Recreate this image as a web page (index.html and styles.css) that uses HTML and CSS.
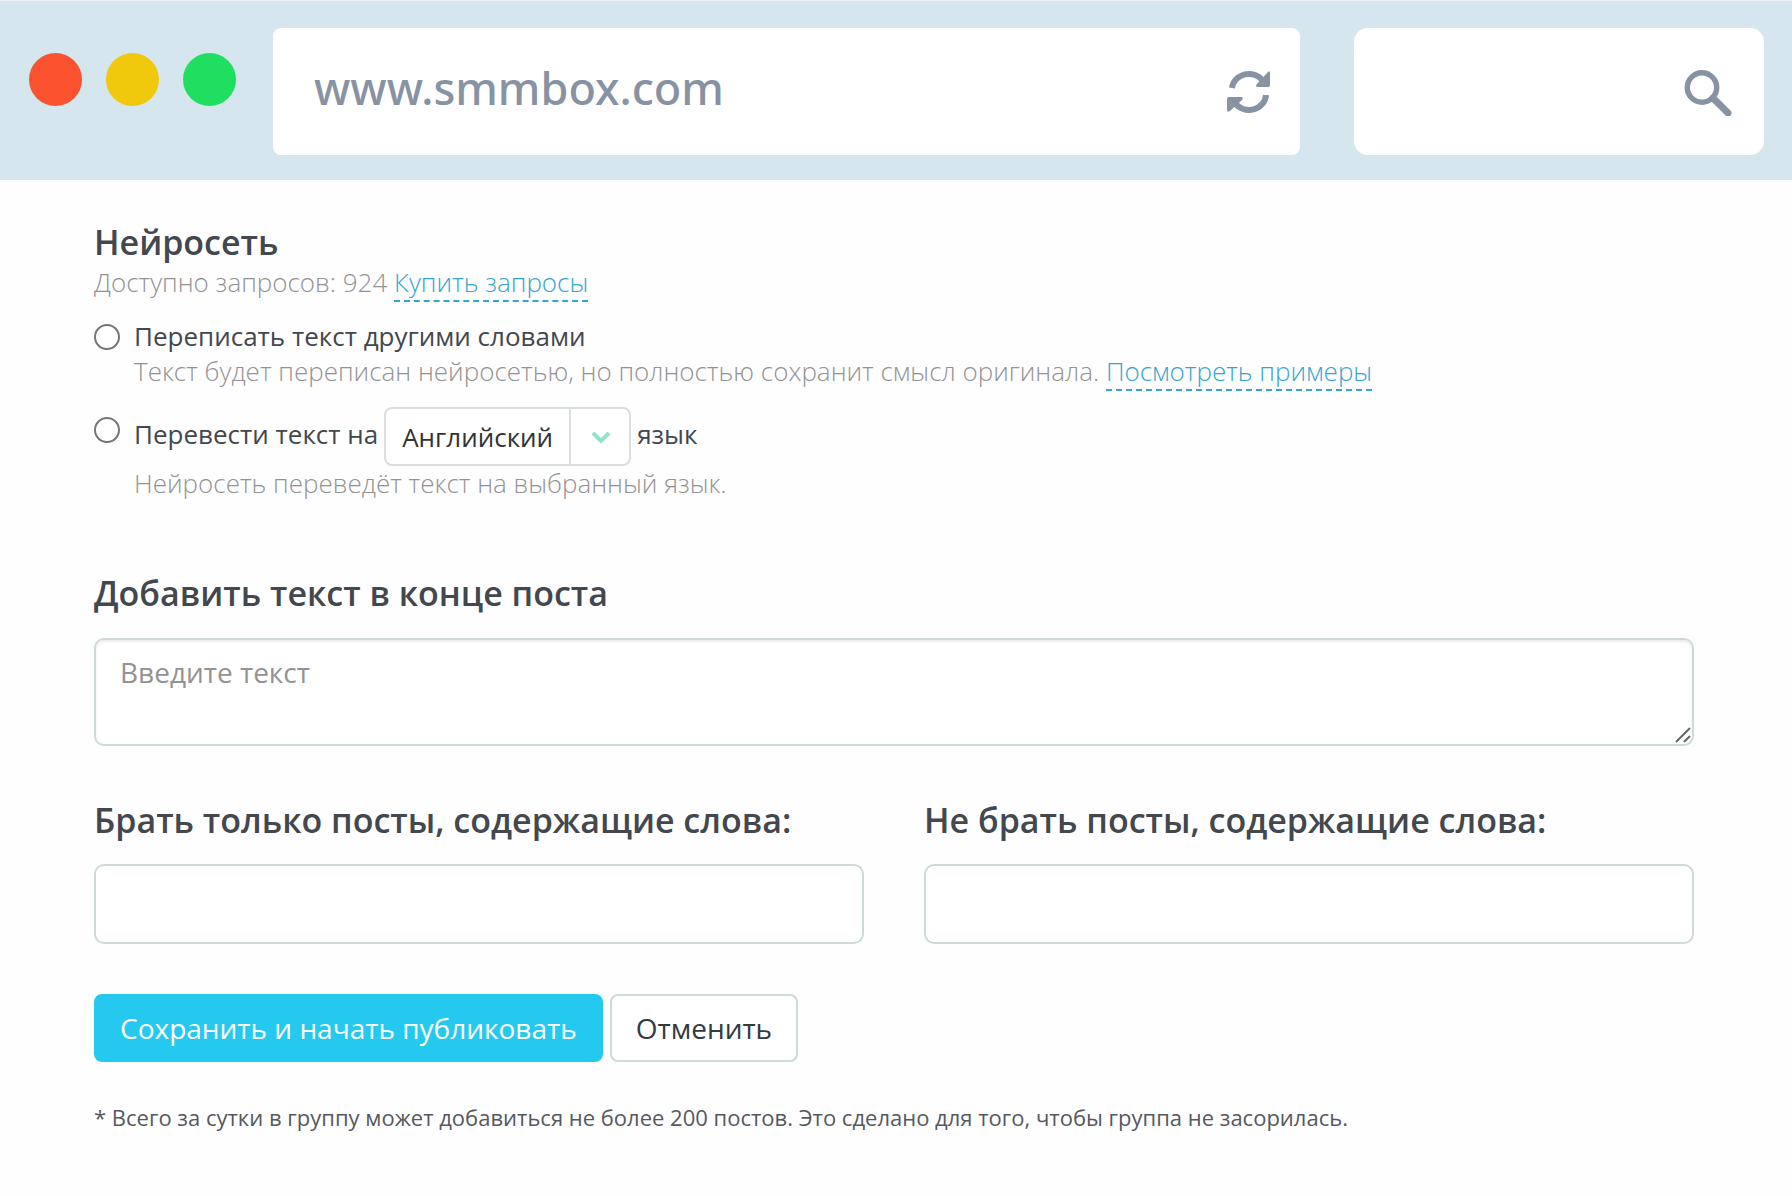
FILE: index.html
```html
<!DOCTYPE html>
<html lang="ru">
<head>
<meta charset="UTF-8">
<meta name="viewport" content="width=device-width, initial-scale=1.0">
<title>SMMBOX - Нейросеть</title>
<link rel="stylesheet" href="styles.css">
</head>
<body>

<header class="browser-bar">
    <div class="dots">
        <span class="dot dot-red"></span>
        <span class="dot dot-yellow"></span>
        <span class="dot dot-green"></span>
    </div>
    <div class="address">
        <input type="text" class="address-input" value="www.smmbox.com" aria-label="Адрес">
        <button type="button" class="icon-btn" aria-label="Обновить">
            <svg width="44" height="44" viewBox="0 0 44 44" fill="#8793a3">
                <path d="M5 18A17 16 0 0 1 36 11" fill="none" stroke="#8793a3" stroke-width="6"/>
                <path d="M41 2Q43 0 43 3V15Q43 17 41 17H30Q28 16 30 14Z"/>
                <path d="M39 25A17 16 0 0 1 8 33" fill="none" stroke="#8793a3" stroke-width="6"/>
                <path d="M3 41Q0 43 0 40V29Q0 27 2 27H14Q17 27 15 30Z"/>
            </svg>
        </button>
    </div>
    <div class="search">
        <input type="search" class="search-input" aria-label="Поиск">
        <button type="button" class="icon-btn" aria-label="Найти">
            <svg width="48" height="48" viewBox="0 0 48 48" fill="none" stroke="#8793a3">
                <circle cx="18" cy="19.5" r="14.7" stroke-width="5.5"/>
                <path d="M29 30L44 45" stroke-width="7" stroke-linecap="round"/>
            </svg>
        </button>
    </div>
</header>

<form class="settings">
    <section class="neuro">
        <h2>Нейросеть</h2>
        <p class="hint">Доступно запросов: 924 <a href="#" class="dashed">Купить запросы</a></p>

        <div class="option">
            <input type="radio" name="neuro" id="rewrite" class="radio">
            <div class="option-line">
                <label for="rewrite">Переписать текст другими словами</label>
            </div>
            <p class="hint">Текст будет переписан нейросетью, но полностью сохранит смысл оригинала. <a href="#" class="dashed">Посмотреть примеры</a></p>
        </div>

        <div class="option option-translate">
            <input type="radio" name="neuro" id="translate" class="radio">
            <div class="option-line">
                <label for="translate">Перевести текст на</label>
                <div class="select-wrap">
                    <select class="select" aria-label="Язык перевода">
                        <option>Английский</option>
                    </select>
                    <svg class="chevron" width="20" height="14" viewBox="0 0 20 14">
                        <path d="M2 3L10 11L18 3" fill="none" stroke="#93e2ce" stroke-width="4"/>
                    </svg>
                </div>
                <label for="translate">язык</label>
            </div>
            <p class="hint">Нейросеть переведёт текст на выбранный язык.</p>
        </div>
    </section>

    <section class="field">
        <h2><label for="postText">Добавить текст в конце поста</label></h2>
        <div class="textarea-wrap">
            <textarea id="postText" class="control" placeholder="Введите текст"></textarea>
            <svg class="grip" width="16" height="16" viewBox="0 0 16 16">
                <path d="M1 15L15 1M9 15L15 9" stroke="#666" stroke-width="2"/>
            </svg>
        </div>
    </section>

    <div class="columns">
        <section class="field">
            <h2><label for="onlyWords">Брать только посты, содержащие слова:</label></h2>
            <input type="text" id="onlyWords" class="control">
        </section>
        <section class="field">
            <h2><label for="stopWords">Не брать посты, содержащие слова:</label></h2>
            <input type="text" id="stopWords" class="control">
        </section>
    </div>

    <div class="actions">
        <button type="submit" class="btn btn-primary">Сохранить и начать публиковать</button>
        <button type="button" class="btn">Отменить</button>
    </div>

    <p class="note">* Всего за сутки в группу может добавиться не более 200 постов. Это сделано для того, чтобы группа не засорилась.</p>
</form>

</body>
</html>
```
FILE: styles.css
```css
* {
    box-sizing: border-box;
}
:root {
    --bar-bg: #d6e6ee;
    --bar-icon: #8793a3;
    --text: #43474e;
    --muted: #939393;
    --link: #35a5d0;
    --border: #cddada;
    --accent: #25c9f0;
}
body {
    margin: 0;
    background: #fefefe;
    color: var(--text);
    font-family: "Open Sans", "Noto Sans", sans-serif;
    font-size: 26px;
    line-height: 35px;
}
h2, p {
    margin: 0;
}
h2 {
    font-size: 34px;
    line-height: 46px;
    font-weight: 600;
}
input, textarea, select, button {
    font-family: inherit;
    color: inherit;
}

/* Browser bar */
.browser-bar {
    display: flex;
    align-items: center;
    padding: 27px 28px 25px 29px;
    background: var(--bar-bg);
    border-top: 1px solid #eaf2f5;
}
.dots {
    display: flex;
    gap: 24px;
    margin: 0 37px 24px 0;
}
.dot {
    width: 53px;
    height: 53px;
    border-radius: 50%;
}
.dot-red {
    background: #fb522f;
}
.dot-yellow {
    background: #f0c90c;
}
.dot-green {
    background: #20df60;
}
.address, .search {
    display: flex;
    align-items: center;
    height: 127px;
    background: #ffffff;
}
.address {
    flex: 1;
    padding: 0 29px 0 41px;
    border-radius: 8px;
}
.search {
    width: 410px;
    margin-left: 54px;
    padding: 0 32px;
    border-radius: 14px;
}
.address-input, .search-input {
    flex: 1;
    min-width: 0;
    padding: 0 0 8px;
    border: none;
    outline: none;
    background: none;
    color: var(--bar-icon);
    font-family: "Noto Sans", sans-serif;
    font-size: 45px;
    font-weight: 500;
}
.icon-btn {
    display: flex;
    padding: 0;
    border: none;
    background: none;
    cursor: pointer;
}

/* Settings form */
.settings {
    padding: 39px 98px 50px 94px;
}
.hint {
    color: var(--muted);
    font-weight: 300;
}
.dashed {
    color: var(--link);
    text-decoration: none;
    border-bottom: 2px dashed var(--link);
}
.option {
    display: grid;
    grid-template-columns: 26px 1fr;
    column-gap: 14px;
    margin-top: 18px;
}
.option .hint {
    grid-column: 2;
}
.option-line {
    display: flex;
    align-items: center;
    gap: 6px;
}
.neuro > .hint {
    margin-bottom: 19px;
}
.radio {
    appearance: none;
    width: 26px;
    height: 26px;
    margin: 5px 0 0;
    border: 2px solid #767676;
    border-radius: 50%;
    background: #ffffff;
}
.radio:checked {
    background: var(--accent);
}
.option-translate .radio {
    margin-top: 10px;
}
.option-translate label {
    padding-bottom: 4px;
}
.select-wrap {
    position: relative;
}
.select {
    display: block;
    appearance: none;
    height: 59px;
    padding: 0 76px 0 16px;
    border: 2px solid #d9dede;
    border-radius: 8px;
    background: linear-gradient(#d9dede, #d9dede) right 58px top / 2px 100% no-repeat #ffffff;
    color: #333333;
    font-size: 26px;
}
.chevron {
    position: absolute;
    right: 20px;
    top: 23px;
    pointer-events: none;
}
.field .control {
    display: block;
    width: 100%;
    padding: 13px 24px;
    border: 2px solid var(--border);
    border-radius: 10px;
    background: #ffffff;
    font-size: 28px;
    line-height: 38px;
}
.neuro {
    margin-bottom: 69px;
}
.textarea-wrap {
    position: relative;
    margin-top: 22px;
}
textarea.control {
    height: 108px;
    resize: none;
    box-shadow: inset 0 2px 3px rgba(0, 0, 0, 0.08);
}
.control::placeholder {
    color: var(--muted);
}
.grip {
    position: absolute;
    right: 3px;
    bottom: 3px;
    pointer-events: none;
}
.columns {
    display: grid;
    grid-template-columns: 1fr 1fr;
    gap: 60px;
    margin-top: 51px;
}
input.control {
    height: 80px;
    margin-top: 21px;
}
.actions {
    display: flex;
    gap: 7px;
    margin-top: 50px;
}
.btn {
    height: 68px;
    padding: 0 24px;
    border: 2px solid var(--border);
    border-radius: 8px;
    background: #ffffff;
    color: #333a40;
    font-size: 28px;
    cursor: pointer;
}
.btn-primary {
    border-color: var(--accent);
    background: var(--accent);
    color: #ffffff;
}
.note {
    margin-top: 40px;
    color: #55595e;
    font-size: 22px;
    line-height: 30px;
}
```
